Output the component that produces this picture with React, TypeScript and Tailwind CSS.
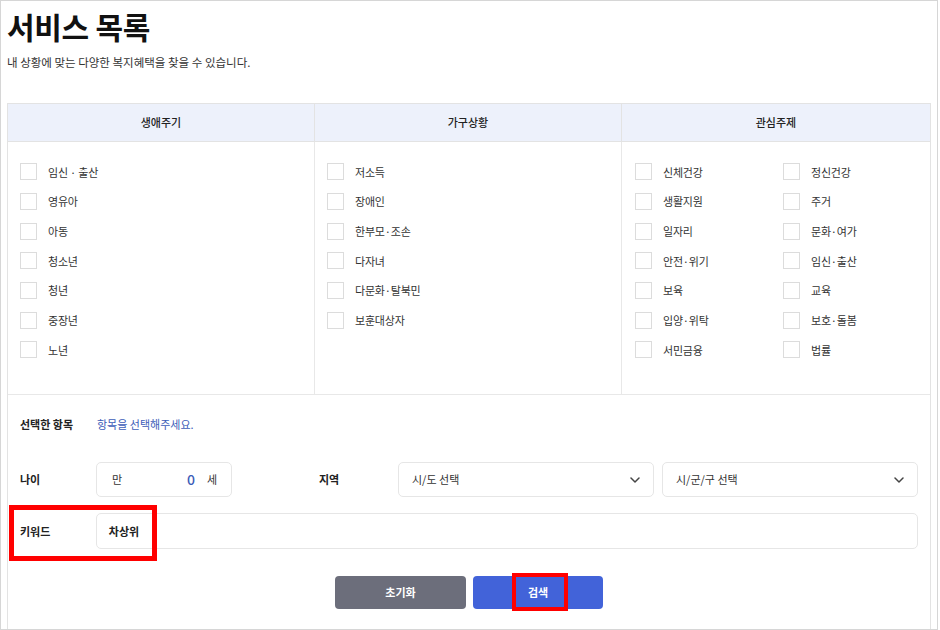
import React from 'react';

const lifeCycle = ['임신 · 출산', '영유아', '아동', '청소년', '청년', '중장년', '노년'];
const household = ['저소득', '장애인', '한부모·조손', '다자녀', '다문화·탈북민', '보훈대상자'];
const interestLeft = ['신체건강', '생활지원', '일자리', '안전·위기', '보육', '입양·위탁', '서민금융'];
const interestRight = ['정신건강', '주거', '문화·여가', '임신·출산', '교육', '보호·돌봄', '법률'];

const CheckRow: React.FC<{ label: string }> = ({ label }) => (
  <label className="flex h-[29.7px] items-center">
    <span className="h-[17px] w-[17px] shrink-0 border border-[#dcdcdc] bg-white" />
    <span className="ml-[11px] text-[11px] tracking-[-0.2px] text-[#333]">{label}</span>
  </label>
);

const Chevron = () => (
  <svg width="10" height="6" viewBox="0 0 10 6" fill="none">
    <path d="M1 1l4 4 4-4" stroke="#444" strokeWidth="1.5" strokeLinecap="round" strokeLinejoin="round" />
  </svg>
);

const App: React.FC = () => {
  return (
    <div className="relative h-[630px] w-[940px] overflow-hidden bg-white font-['Noto_Sans_CJK_KR',sans-serif]">
      <div className="flex h-full w-[938px] flex-col border border-[#d6d6d6] bg-white">
        {/* header */}
        <div className="px-[6px] pt-[5px]">
          <h1 className="text-[30px] font-bold leading-[40px] tracking-[-0.3px] text-[#111]">서비스 목록</h1>
          <p className="mt-[8px] text-[11.5px] leading-[16px] text-[#333]">내 상황에 맞는 다양한 복지혜택을 찾을 수 있습니다.</p>
        </div>

        {/* panel */}
        <div className="ml-[6px] mt-[33px] flex w-[924px] flex-1 flex-col border-x border-t border-[#e3e3e3]">
          <div className="grid grid-cols-[307px_307px_1fr] border-b border-[#e3e3e3] bg-[#edf1fb]">
            {['생애주기', '가구상황', '관심주제'].map((t, i) => (
              <div
                key={t}
                className={`flex h-[37px] items-center justify-center text-[11px] font-medium text-[#222] ${i < 2 ? 'border-r border-[#e3e3e3]' : ''}`}
              >
                {t}
              </div>
            ))}
          </div>
          <div className="grid h-[253px] grid-cols-[307px_307px_1fr] border-b border-[#e8e8e8]">
            <div className="border-r border-[#e8e8e8] pl-[12px] pt-[15px]">
              {lifeCycle.map((l) => (
                <CheckRow key={l} label={l} />
              ))}
            </div>
            <div className="border-r border-[#e8e8e8] pl-[12px] pt-[15px]">
              {household.map((l) => (
                <CheckRow key={l} label={l} />
              ))}
            </div>
            <div className="grid grid-cols-[148px_1fr] pl-[13px] pt-[15px]">
              <div>
                {interestLeft.map((l) => (
                  <CheckRow key={l} label={l} />
                ))}
              </div>
              <div>
                {interestRight.map((l) => (
                  <CheckRow key={l} label={l} />
                ))}
              </div>
            </div>
          </div>

          {/* form */}
          <div className="px-[12px]">
            <div className="flex h-[59px] items-center">
              <span className="w-[77px] text-[11px] font-semibold text-[#222]">선택한 항목</span>
              <span className="text-[11px] text-[#3d5db8]">항목을 선택해주세요.</span>
            </div>
            <div className="mt-[8px] flex h-[35px] items-center">
              <span className="w-[76px] text-[11px] font-semibold text-[#222]">나이</span>
              <div className="flex h-[35px] w-[136px] items-center rounded-[5px] border border-[#e6e6e6] pl-[15px] pr-[14px] text-[11px] text-[#333]">
                <span>만</span>
                <span className="ml-auto text-[14px] font-medium text-[#3d5db8]">0</span>
                <span className="ml-[12px]">세</span>
              </div>
              <span className="ml-[87px] w-[79px] text-[11px] font-semibold text-[#222]">지역</span>
              <div className="flex h-[35px] w-[256px] items-center justify-between rounded-[5px] border border-[#e6e6e6] pl-[13px] pr-[13px] text-[11px] text-[#333]">
                <span>시/도 선택</span>
                <Chevron />
              </div>
              <div className="ml-[8px] flex h-[35px] w-[256px] items-center justify-between rounded-[5px] border border-[#e6e6e6] pl-[13px] pr-[13px] text-[11px] text-[#333]">
                <span>시/군/구 선택</span>
                <Chevron />
              </div>
            </div>
            <div className="mt-[16px] flex h-[36px] items-center">
              <span className="w-[76px] text-[11px] font-semibold text-[#222]">키워드</span>
              <div className="flex h-[36px] w-[824px] items-center rounded-[5px] border border-[#e6e6e6] pl-[12px] text-[11px] font-semibold text-[#222]">
                차상위
              </div>
            </div>
            <div className="mt-[27px] flex justify-center gap-[7px]">
              <button className="h-[33px] w-[131px] rounded-[4px] bg-[#6c6e7b] text-[11px] font-bold text-white">초기화</button>
              <button className="h-[33px] w-[130px] rounded-[4px] bg-[#4263d9] text-[11px] font-bold text-white">검색</button>
            </div>
          </div>
        </div>
      </div>

      {/* annotation boxes */}
      <div className="pointer-events-none absolute left-[9px] top-[505px] h-[56px] w-[148px] border-[5px] border-[#f00]" />
      <div className="pointer-events-none absolute left-[512px] top-[573px] h-[38px] w-[56px] border-[4px] border-[#f00]" />
    </div>
  );
};

export default App;
